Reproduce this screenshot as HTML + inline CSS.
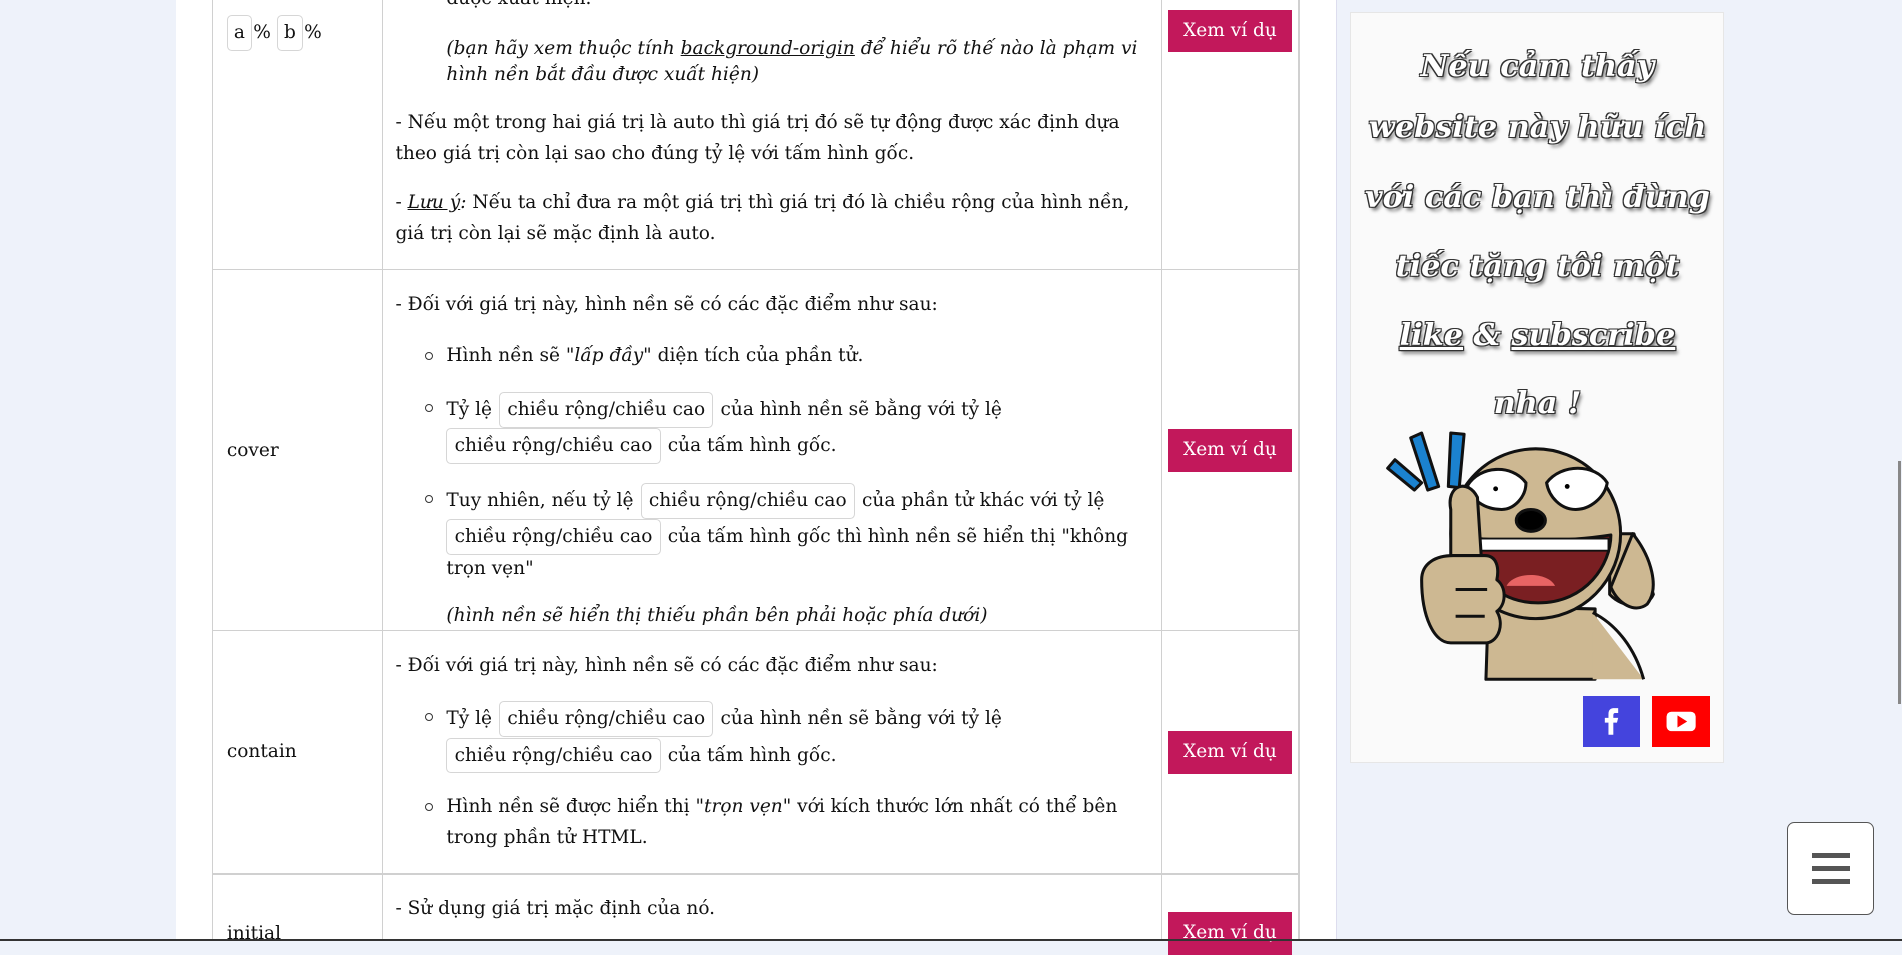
<!DOCTYPE html>
<html><head><meta charset="utf-8">
<style>
html{zoom:1.21301}
body{margin:0;width:1568px;height:776px;overflow:hidden;background:#eef2fa;position:relative;font-family:"DejaVu Serif",serif;font-size:15.3px;color:#111}
.panel{position:absolute;left:145px;top:0;width:956px;height:776px;background:#fff}
.vl{position:absolute;top:0;width:1px;height:776px;background:#d0d0d0}
.hl{position:absolute;left:175px;width:896px;height:1px;background:#d0d0d0}
.t{position:absolute;white-space:nowrap;line-height:26px}
.i{font-style:italic}
.c{display:inline-block;border:1px solid #d6d6d6;border-radius:4px;padding:0 6px;line-height:28px;margin:0 1px}
.btn{position:absolute;left:963px;width:102px;height:35px;background:#c2185b;color:#fff;text-align:center;line-height:35px;font-size:15.3px}
.b{position:absolute;width:5px;height:5px;border:1px solid #333;border-radius:50%}
.side{position:absolute;left:1113px;top:10px;width:307px;height:617px;background:#fafafa;border:1px solid #e6e6e6}
.s{position:absolute;left:1113px;width:309px;text-align:center;font-family:"DejaVu Serif",serif;font-style:italic;font-weight:bold;font-size:25px;color:#fff;text-shadow:0 0 1px #333,1px 1px 0 #333,-1px -1px 0 #333,1px -1px 0 #333,-1px 1px 0 #333,2px 3px 3px #777;white-space:nowrap}
</style></head><body>
<div class="panel"></div>
<div class="vl" style="left:1101px;background:#dde"></div>
<div class="vl" style="left:175px"></div>
<div class="vl" style="left:315px"></div>
<div class="vl" style="left:957px"></div>
<div class="vl" style="left:1070px;width:2px"></div>
<div class="hl" style="top:222px"></div>
<div class="hl" style="top:519px"></div>
<div class="hl" style="top:720px"></div>

<!-- row 1 -->
<div class="t" style="left:186px;top:12px"><span class="c" style="padding:0 5px">a</span>%<span class="c" style="padding:0 5px;margin-left:5px">b</span>%</div>
<div class="t" style="left:368px;top:-14px">được xuất hiện.</div>
<div class="t i" style="left:368px;top:27px">(bạn hãy xem thuộc tính <u>background-origin</u> để hiểu rõ thế nào là phạm vi</div>
<div class="t i" style="left:368px;top:49px">hình nền bắt đầu được xuất hiện)</div>
<div class="t" style="left:326px;top:88px">- Nếu một trong hai giá trị là auto thì giá trị đó sẽ tự động được xác định dựa</div>
<div class="t" style="left:326px;top:114px">theo giá trị còn lại sao cho đúng tỷ lệ với tấm hình gốc.</div>
<div class="t" style="left:326px;top:154px">- <i><u>Lưu ý</u>:</i> Nếu ta chỉ đưa ra một giá trị thì giá trị đó là chiều rộng của hình nền,</div>
<div class="t" style="left:326px;top:180px">giá trị còn lại sẽ mặc định là auto.</div>
<div class="btn" style="top:8px">Xem ví dụ</div>

<!-- row 2 -->
<div class="t" style="left:187px;top:359px">cover</div>
<div class="t" style="left:326px;top:238px">- Đối với giá trị này, hình nền sẽ có các đặc điểm như sau:</div>
<div class="b" style="left:350px;top:290px"></div>
<div class="t" style="left:368px;top:280px">Hình nền sẽ <i>"lấp đầy"</i> diện tích của phần tử.</div>
<div class="b" style="left:350px;top:333px"></div>
<div class="t" style="left:368px;top:323px">Tỷ lệ <span class="c">chiều rộng/chiều cao</span> của hình nền sẽ bằng với tỷ lệ</div>
<div class="t" style="left:367px;top:353px"><span class="c">chiều rộng/chiều cao</span> của tấm hình gốc.</div>
<div class="b" style="left:350px;top:408px"></div>
<div class="t" style="left:368px;top:398px">Tuy nhiên, nếu tỷ lệ <span class="c">chiều rộng/chiều cao</span> của phần tử khác với tỷ lệ</div>
<div class="t" style="left:367px;top:428px"><span class="c">chiều rộng/chiều cao</span> của tấm hình gốc thì hình nền sẽ hiển thị "không</div>
<div class="t" style="left:368px;top:456px">trọn vẹn"</div>
<div class="t i" style="left:368px;top:495px">(hình nền sẽ hiển thị thiếu phần bên phải hoặc phía dưới)</div>
<div class="btn" style="top:354px">Xem ví dụ</div>

<!-- row 3 -->
<div class="t" style="left:187px;top:607px">contain</div>
<div class="t" style="left:326px;top:536px">- Đối với giá trị này, hình nền sẽ có các đặc điểm như sau:</div>
<div class="b" style="left:350px;top:588px"></div>
<div class="t" style="left:368px;top:578px">Tỷ lệ <span class="c">chiều rộng/chiều cao</span> của hình nền sẽ bằng với tỷ lệ</div>
<div class="t" style="left:367px;top:608px"><span class="c">chiều rộng/chiều cao</span> của tấm hình gốc.</div>
<div class="b" style="left:350px;top:662px"></div>
<div class="t" style="left:368px;top:652px">Hình nền sẽ được hiển thị <i>"trọn vẹn"</i> với kích thước lớn nhất có thể bên</div>
<div class="t" style="left:368px;top:678px">trong phần tử HTML.</div>
<div class="btn" style="top:603px">Xem ví dụ</div>

<!-- row 4 -->
<div class="t" style="left:187px;top:757px">initial</div>
<div class="t" style="left:326px;top:736px">- Sử dụng giá trị mặc định của nó.</div>
<div class="btn" style="top:752px">Xem ví dụ</div>

<!-- sidebar -->
<div class="side"></div>
<div class="s" style="top:40px">Nếu cảm thấy</div>
<div class="s" style="top:91px">website này hữu ích</div>
<div class="s" style="top:148px">với các bạn thì đừng</div>
<div class="s" style="top:205px">tiếc tặng tôi một</div>
<div class="s" style="top:262px"><u>like</u> &amp; <u>subscribe</u></div>
<div class="s" style="top:318px">nha !</div>

<svg style="position:absolute;left:0;top:0" width="1568" height="776">
 <g stroke="#111" stroke-width="2.5" stroke-linejoin="round">
  <path d="M1144 386l6-7 22 19-6 6z" fill="#1b82cf"/>
  <path d="M1163 361l9-4 14 44-9 3z" fill="#1b82cf"/>
  <path d="M1196 357l11 1-4 44-9-1z" fill="#1b82cf"/>
  <path d="M1363 490c-5 12-25 12-36 0l0-50 20 0z" fill="#cdb892"/>
  <path d="M1227 500l-2 60 90 0 0-58z" fill="#cdb892"/>
  <path d="M1313 505l42 55-42 0z" fill="#cdb892" stroke="none"/>
  <path d="M1313 505c20 10 35 30 42 55" fill="none"/>
  <circle cx="1266" cy="440" r="70" fill="#cdb892"/>
  <path d="M1346 440c16 20 22 45 12 58-10 8-24 0-30-14z" fill="#cdb892"/>
  <path d="M1210 400c10-16 36-18 48-2 0 12-10 22-20 22-14 0-26-8-28-20z" fill="#fff"/>
  <path d="M1275 398c12-16 40-16 50 0-2 12-14 22-26 22-12 0-22-10-24-22z" fill="#fff"/>
  <ellipse cx="1262" cy="429" rx="12" ry="9" fill="#000"/>
  <path d="M1210 443c30 4 80 4 118-2 0 24-20 56-60 56-38 0-56-30-58-54z" fill="#7a1f22"/>
  <path d="M1212 444h114v10h-114z" fill="#fff" stroke-width="1.5"/>
  <path d="M1242 483c6-12 34-12 40 0z" fill="#e86464" stroke="none"/>
  <path d="M1196 420c-4-20 14-26 22-10l4 62-26 0z" fill="#cdb892"/>
  <path d="M1172 478c0-14 12-20 26-20h26c10 0 12 10 10 20 8 6 8 20 0 26 6 10 2 24-8 26h-30c-14 0-24-22-24-52z" fill="#cdb892"/>
  <path d="M1200 486h26M1200 508h24" fill="none"/>
 </g>
 <circle cx="1233" cy="403" r="2" fill="#000"/><circle cx="1292" cy="401" r="2" fill="#000"/>
</svg>

<div style="position:absolute;left:1305px;top:574px;width:47px;height:42px;background:#4444dd"></div>
<svg style="position:absolute;left:1305px;top:574px" width="47" height="42" viewBox="0 0 47 42"><path d="M21 32V22h-3v-4h3v-3c0-4 2-5 5-5h3v4h-2c-1 0-2 0-2 2v2h4l-1 4h-3v10z" fill="#fff"/></svg>
<div style="position:absolute;left:1362px;top:574px;width:48px;height:42px;background:#f00"></div>
<svg style="position:absolute;left:1362px;top:574px" width="48" height="42" viewBox="0 0 48 42"><rect x="12" y="13" width="24" height="16" rx="4" fill="#fff"/><path d="M21 16v10l8-5z" fill="#f00"/></svg>

<div style="position:absolute;left:1473px;top:678px;width:70px;height:75px;background:#fff;border:1px solid #555;border-radius:6px"></div>
<div style="position:absolute;left:1494px;top:703px;width:31px;height:4px;background:#555"></div>
<div style="position:absolute;left:1494px;top:714px;width:31px;height:4px;background:#555"></div>
<div style="position:absolute;left:1494px;top:725px;width:31px;height:4px;background:#555"></div>
<div style="position:absolute;left:1565px;top:380px;width:2px;height:200px;background:#888"></div>
<div style="position:absolute;left:0;top:774px;width:1568px;height:2px;background:#333"></div>
</body></html>
